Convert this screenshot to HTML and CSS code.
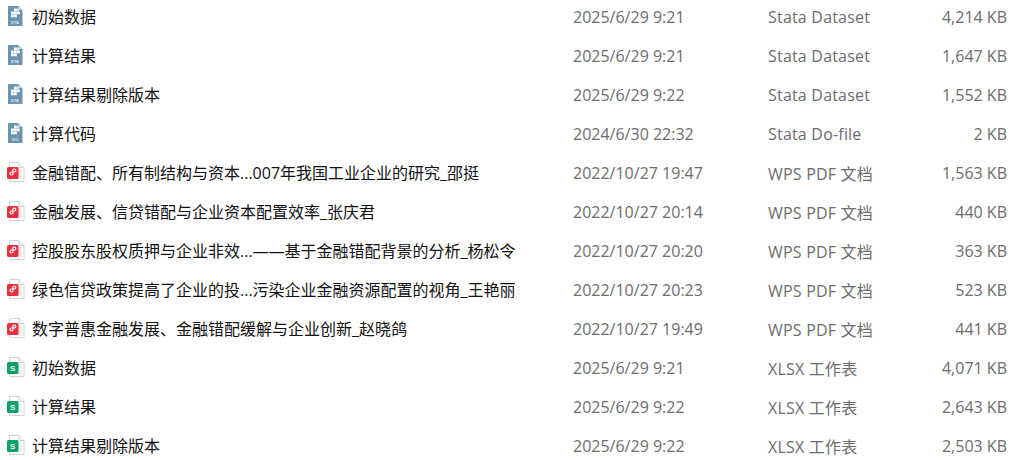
FILE: index.html
```html
<!DOCTYPE html>
<html lang="zh-CN">
<head>
<meta charset="UTF-8">
<meta name="viewport" content="width=device-width, initial-scale=1.0">
<title>文件列表</title>
<link rel="stylesheet" href="styles.css">
</head>
<body>

<!-- shared file icons -->
<svg class="defs" width="0" height="0">
<symbol id="stata-sheet" viewBox="0 0 18 24">
<path d="M1 1h10.500L15.500 5V21H1z" fill="#6c93b0"/>
<path d="M11.500 1V5H15.500z" fill="#c5d5e0"/>
<g fill="#fff">
<rect x="7" y="3.500" width="2.800" height="2.800"/>
<rect x="4" y="6.500" width="2.800" height="2.800"/>
<rect x="7" y="6.500" width="2.800" height="2.800"/>
<rect x="10" y="6.500" width="2.800" height="2.800"/>
<rect x="4" y="9.500" width="2.800" height="2.800"/>
<rect x="7" y="9.500" width="2.800" height="2.800"/>
</g>
<rect x="10" y="3.500" width="2" height="2.800" fill="#dbe5ec"/>
</symbol>
<symbol id="doc-sheet" viewBox="0 0 18 24">
<path d="M2.500 1.500h9.500l5 5v14h-14.500z" fill="#fff" stroke="#d2d2d2"/>
<path d="M12 1.500v5h5" fill="#f5f5f5" stroke="#d2d2d2"/>
</symbol>
<symbol id="pdf-file" viewBox="0 0 18 24">
<use href="#doc-sheet"/>
<rect x="11" y="8" width="4" height="10" fill="#fbe9ea"/>
<rect x="0" y="6" width="11.500" height="12" rx="1.500" fill="#e8303f"/>
<path d="M5.800 11.200v-1.700a1.500 1.500 0 1 1 1.500 1.500H4.500a1.500 1.500 0 1 0 1.500 1.500v-1.300" fill="none" stroke="#fff" stroke-width="1.200"/>
</symbol>
<symbol id="xlsx-sheet" viewBox="0 0 18 24">
<use href="#doc-sheet"/>
<rect x="11" y="8" width="4" height="10" fill="#e6f5ef"/>
<rect x="0" y="6" width="11.500" height="12" rx="1.500" fill="#0f9f6a"/>
</symbol>
</svg>

<div class="file-list">

<div class="file-row">
<svg class="icon" width="18" height="24"><use href="#stata-sheet"/><text class="icon-tag" x="8" y="18.500">DTA</text></svg>
<span class="name">初始数据</span><span class="date">2025/6/29 9:21</span><span class="type">Stata Dataset</span><span class="size">4,214 KB</span>
</div>
<div class="file-row">
<svg class="icon" width="18" height="24"><use href="#stata-sheet"/><text class="icon-tag" x="8" y="18.500">DTA</text></svg>
<span class="name">计算结果</span><span class="date">2025/6/29 9:21</span><span class="type">Stata Dataset</span><span class="size">1,647 KB</span>
</div>
<div class="file-row">
<svg class="icon" width="18" height="24"><use href="#stata-sheet"/><text class="icon-tag" x="8" y="18.500">DTA</text></svg>
<span class="name">计算结果剔除版本</span><span class="date">2025/6/29 9:22</span><span class="type">Stata Dataset</span><span class="size">1,552 KB</span>
</div>
<div class="file-row">
<svg class="icon" width="18" height="24"><use href="#stata-sheet"/><text class="icon-tag" x="8" y="18.500">DO</text></svg>
<span class="name">计算代码</span><span class="date">2024/6/30 22:32</span><span class="type">Stata Do-file</span><span class="size">2 KB</span>
</div>

<div class="file-row">
<svg class="icon" width="18" height="24"><use href="#pdf-file"/></svg>
<span class="name">金融错配、所有制结构与资本...007年我国工业企业的研究_邵挺</span><span class="date">2022/10/27 19:47</span><span class="type">WPS PDF 文档</span><span class="size">1,563 KB</span>
</div>
<div class="file-row">
<svg class="icon" width="18" height="24"><use href="#pdf-file"/></svg>
<span class="name">金融发展、信贷错配与企业资本配置效率_张庆君</span><span class="date">2022/10/27 20:14</span><span class="type">WPS PDF 文档</span><span class="size">440 KB</span>
</div>
<div class="file-row">
<svg class="icon" width="18" height="24"><use href="#pdf-file"/></svg>
<span class="name">控股股东股权质押与企业非效...——基于金融错配背景的分析_杨松令</span><span class="date">2022/10/27 20:20</span><span class="type">WPS PDF 文档</span><span class="size">363 KB</span>
</div>
<div class="file-row">
<svg class="icon" width="18" height="24"><use href="#pdf-file"/></svg>
<span class="name">绿色信贷政策提高了企业的投...污染企业金融资源配置的视角_王艳丽</span><span class="date">2022/10/27 20:23</span><span class="type">WPS PDF 文档</span><span class="size">523 KB</span>
</div>
<div class="file-row">
<svg class="icon" width="18" height="24"><use href="#pdf-file"/></svg>
<span class="name">数字普惠金融发展、金融错配缓解与企业创新_赵晓鸽</span><span class="date">2022/10/27 19:49</span><span class="type">WPS PDF 文档</span><span class="size">441 KB</span>
</div>

<div class="file-row">
<svg class="icon" width="18" height="24"><use href="#xlsx-sheet"/><text class="icon-letter" x="5.750" y="15">S</text></svg>
<span class="name">初始数据</span><span class="date">2025/6/29 9:21</span><span class="type">XLSX 工作表</span><span class="size">4,071 KB</span>
</div>
<div class="file-row">
<svg class="icon" width="18" height="24"><use href="#xlsx-sheet"/><text class="icon-letter" x="5.750" y="15">S</text></svg>
<span class="name">计算结果</span><span class="date">2025/6/29 9:22</span><span class="type">XLSX 工作表</span><span class="size">2,643 KB</span>
</div>
<div class="file-row">
<svg class="icon" width="18" height="24"><use href="#xlsx-sheet"/><text class="icon-letter" x="5.750" y="15">S</text></svg>
<span class="name">计算结果剔除版本</span><span class="date">2025/6/29 9:22</span><span class="type">XLSX 工作表</span><span class="size">2,503 KB</span>
</div>

</div>

</body>
</html>
```

FILE: styles.css
```css
html, body {
height: 100%;
overflow: hidden;
}

body {
margin: 0;
background-color: #fff;
font-family: "Open Sans", "Noto Sans CJK SC", sans-serif;
font-size: 16px;
}

.defs {
display: block;
}

.file-list {
margin-top: -3px;
}

.file-row {
display: grid;
grid-template-columns: 25px 541px 195px 1fr auto;
align-items: center;
height: 39px;
padding: 0 4px 0 7px;
color: #6d6d6d;
}

.icon {
display: block;
}

.name {
color: #111;
margin-bottom: 2px;
}

.type {
letter-spacing: 0.2px;
}

.size {
text-align: right;
}

.icon-tag {
fill: #dfe8ee;
font-family: "Liberation Sans", sans-serif;
font-size: 4px;
font-weight: bold;
text-anchor: middle;
}

.icon-letter {
fill: #e6f7f0;
font-family: "Liberation Sans", sans-serif;
font-size: 8px;
font-weight: bold;
text-anchor: middle;
}
```
